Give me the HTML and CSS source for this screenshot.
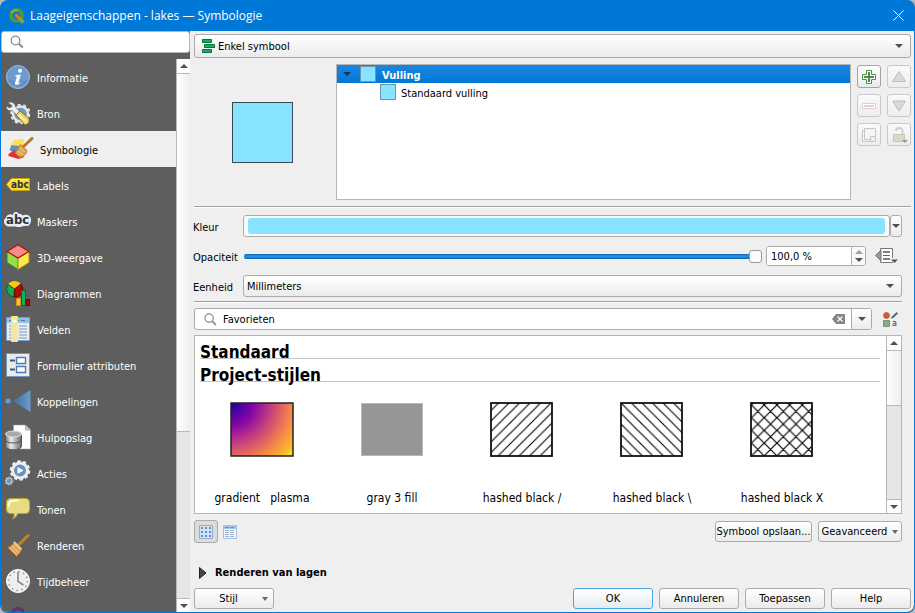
FILE: index.html
```html
<!DOCTYPE html>
<html lang="nl">
<head>
<meta charset="utf-8">
<title>Laageigenschappen - lakes — Symbologie</title>
<link rel="stylesheet" href="styles.css">
</head>
<body>
<div class="window">
  <header class="titlebar">
    <svg class="logo" width="16" height="16" viewBox="0 0 16 16" aria-hidden="true">
      <circle cx="7.500" cy="7.500" r="5.500" fill="none" stroke="#589632" stroke-width="3.500"/>
      <path d="M2.500 5A5.500 5.500 0 0 1 9 2.300" fill="none" stroke="#93b023" stroke-width="2"/>
      <path d="M10.500 10.500l4 4" stroke="#7fae38" stroke-width="3.500"/>
      <path d="M6.500 6.500l4 4" stroke="#ee7913" stroke-width="3"/>
    </svg>
    <h1 class="title">Laageigenschappen - lakes — Symbologie</h1>
    <button class="close" aria-label="Sluiten">
      <svg width="11" height="11" viewBox="0 0 11 11"><path d="M.5 .5l10 10M10.500 .5l-10 10" stroke="#fff" fill="none"/></svg>
    </button>
  </header>

  <div class="content">
    <aside class="sidebar">
      <div class="search">
        <svg width="14" height="14" viewBox="0 0 14 14" fill="none" stroke="#8c8c8c"><circle cx="5.500" cy="5.500" r="4.300" stroke-width="1.300"/><path d="M8.800 8.800l4 3.700" stroke-width="2"/></svg>
        <input type="text" aria-label="Zoeken">
      </div>
      <div class="side-body">
        <nav class="side-list">
          <a href="#" class="side-item">
            <svg width="24" height="24" viewBox="0 0 24 24"><circle cx="12" cy="12" r="11.500" fill="#6d9bcd" stroke="#9dbbe0"/><path d="M2 14a11 11 0 0 0 20 1c-6 2-14 2-20-1z" fill="#4f83bd" opacity=".5"/><circle cx="14" cy="5.800" r="2" fill="#fff"/><path d="M9.300 10.300l5.500-.8-2.300 8.200c-.2.900.6.700 2-.4l.4.500c-2 2.300-6.500 3-5.900.2l1.900-6.300-1.900-.7z" fill="#fff"/></svg>
            Informatie</a>
          <a href="#" class="side-item">
            <svg width="24" height="24" viewBox="0 0 24 24"><circle cx="14.500" cy="13" r="7.500" fill="#6d97c4" stroke="#e6e6e6" stroke-width="2.500"/><circle cx="14.500" cy="13" r="9.300" fill="none" stroke="#e6e6e6" stroke-width="2" stroke-dasharray="3 2.800"/><path d="M2 1.500c4-1 7 0 7.500 4.500l4 4.500-3 3-4.500-4c-4 .5-6-1-5.500-4l3.500 1.500L6.500 5z" fill="#efefef" stroke="#777" stroke-width=".7"/><path d="M10 14l4-4 9 7.500v4l-2.500 2h-2z" fill="#efd667" stroke="#8a7430"/><path d="M13 14l7 6.500" stroke="#fff2a6" stroke-width="2"/></svg>
            Bron</a>
          <a href="#" class="side-item selected" aria-current="page">
            <svg width="26" height="24" viewBox="0 0 26 24"><path d="M6 3l10-1-1 7-9 4-3-5z" fill="#fbe34c"/><path d="M3.500 8l8 1 2 7-9-1-3-2z" fill="#5b92ca"/><path d="M.5 17l6-4 10 7-6 2-10-3z" fill="#e33232"/><path d="M24 1.500l-8.500 8" stroke="#b9742a" stroke-width="3" stroke-linecap="round"/><path d="M12.500 7.500l6.500 6c-1 4-3 6-7.500 6.500L7 16z" fill="#dda653" stroke="#b87b2d"/><path d="M10 14l5 4M12 11l5 4" stroke="#f1cd8c"/></svg>
            Symbologie</a>
          <a href="#" class="side-item">
            <svg width="24" height="24" viewBox="0 0 24 24"><path d="M.5 11.500l5-6h18v12h-18z" fill="#f5dc3e" stroke="#c9a405"/><path d="M2 11l4-4.500h16.500" fill="none" stroke="#fff3a0"/><text x="5" y="15" class="glyph glyph-label">abc</text></svg>
            Labels</a>
          <a href="#" class="side-item">
            <svg class="mask" width="28" height="24" viewBox="0 0 28 24"><path d="M5 17.500a5 5 0 0 1-3-9c1-3 5-4 7-2.500 0-3 4-4 5-1.500 3 0 4 1 4.500 2 5-2 8.500 1 8.500 4s-1 7-5 6.500-4 1-7 1-4-.5-10-.5z" fill="#e7eef8"/><text x="2" y="15" class="glyph glyph-mask">abc</text></svg>
            Maskers</a>
          <a href="#" class="side-item">
            <svg width="24" height="26" viewBox="0 0 24 26"><path d="M1 7.500l11 6.500v11.500l-11-7z" fill="#8fe04c" stroke="#4c7c1d"/><path d="M23 7.500L12 14v11.500l11-7z" fill="#ffe94c" stroke="#b18d12"/><path d="M12 .8l11 6.700L12 14 1 7.500z" fill="#f58b8b" stroke="#b90d0d" stroke-width="1.200"/></svg>
            3D-weergave</a>
          <a href="#" class="side-item">
            <svg width="24" height="26" viewBox="0 0 24 26"><path d="M8.500 9L2 4.500A8 8 0 0 1 15 4z" fill="#fcc60b"/><path d="M8.500 9L2 4.500A8 8 0 0 0 8 17z" fill="#0cb457" stroke="#05602e"/><path d="M8.500 9L15 4a8 8 0 0 1-6.500 13z" fill="#b90808" stroke="#6c0000"/><path d="M10.500 18.500h4v7h-4z" fill="#fcca4a" stroke="#e28c06"/><path d="M15.500 10.500h4v15h-4z" fill="#0cb457" stroke="#05602e"/><path d="M20.500 19.500h3v6h-3z" fill="#b90808" stroke="#6c0000"/></svg>
            Diagrammen</a>
          <a href="#" class="side-item">
            <svg width="24" height="26" viewBox="0 0 24 26"><path d="M.5 1.500h23v23H.5z" fill="#ececec" stroke="#7ba1cf"/><path d="M1 2h22v5H1z" fill="#8fc1e6"/><path d="M3 4.500h18" stroke="#4b7dae" stroke-dasharray="4 2"/><path d="M3 10h19M3 13h19M3 16h19M3 19h19M3 22h19" stroke="#7b9ac0" stroke-dasharray="8 2"/><path d="M5.500.5h6v25h-6z" fill="#f2e7a2" stroke="#fff24d"/><circle cx="8.500" cy="5" r="1.500" fill="#fff"/></svg>
            Velden</a>
          <a href="#" class="side-item">
            <svg width="24" height="24" viewBox="0 0 24 24"><path d="M.5 .5h23v23H.5z" fill="#e9ecef" stroke="#7396bc"/><path d="M4 7.500h5M4 16.500h5" stroke="#355c82" stroke-width="2"/><path d="M10.500 4.500h9v6h-9zM10.500 13.500h9v6h-9z" fill="#fff" stroke="#4b7db4" stroke-width="1.400"/></svg>
            Formulier attributen</a>
          <a href="#" class="side-item">
            <svg class="wide" width="26" height="24" viewBox="0 0 26 24"><defs><linearGradient id="cone" x1="0" x2="1"><stop offset="0" stop-color="#3e6da1"/><stop offset="1" stop-color="#6d9bcd"/></linearGradient></defs><path d="M8 12L25.500 1v22z" fill="url(#cone)"/><circle cx="3" cy="12" r="2.800" fill="#6d9bcd" stroke="#3e6da1" stroke-width=".5"/></svg>
            Koppelingen</a>
          <a href="#" class="side-item">
            <svg class="wide" width="26" height="26" viewBox="0 0 26 26"><defs><linearGradient id="drum" x1="0" x2="1"><stop offset="0" stop-color="#777"/><stop offset=".35" stop-color="#eee"/><stop offset="1" stop-color="#666"/></linearGradient></defs><path d="M8.500 1h12l5 5v19h-17z" fill="#fdfdfd" stroke="#999" stroke-width=".5"/><path d="M20.500 1v5h5z" fill="#ccc" stroke="#888" stroke-width=".6"/><path d="M.5 10v12c0 5 16 5 16 0V10z" fill="url(#drum)" stroke="#555"/><path d="M.5 16c0 4 16 4 16 0" fill="none" stroke="#555"/><ellipse cx="8.500" cy="10" rx="8" ry="3" fill="#aaa" stroke="#ddd"/></svg>
            Hulpopslag</a>
          <a href="#" class="side-item">
            <svg class="wide" width="26" height="26" viewBox="0 0 26 26"><circle cx="15" cy="10.500" r="7.500" fill="#6791c3" stroke="#eee" stroke-width="3"/><circle cx="15" cy="10.500" r="9.200" fill="none" stroke="#eee" stroke-width="2.200" stroke-dasharray="3.200 2.580"/><path d="M12.500 7l6 3.500-6 3.500z" fill="#fff"/><circle cx="4" cy="21" r="3.200" fill="#6d97c8" stroke="#ddd"/><circle cx="4" cy="21" r="4" fill="none" stroke="#bbb" stroke-dasharray="1.500 1.500"/></svg>
            Acties</a>
          <a href="#" class="side-item">
            <svg width="24" height="24" viewBox="0 0 24 24"><path d="M4.500 1.500h15q4 0 4 4v7q0 4-4 4h-8q0 3-5 5.500 2.500-3 1.500-5.500H4.500q-4 0-4-4v-7q0-4 4-4z" fill="#e7dc82" stroke="#c0a52e"/><path d="M2.500 10c0-6 2-6.500 10-6.500" fill="none" stroke="#fffce0" stroke-width="2"/></svg>
            Tonen</a>
          <a href="#" class="side-item">
            <svg width="24" height="24" viewBox="0 0 24 24"><path d="M22 2.500l-8.500 8.500" stroke="#c68221" stroke-width="3" stroke-linecap="round"/><path d="M8 8.500l7.500 7.500c0 3-3 5.500-5 7.500L1.500 14.500c2-1 5-2 6.500-6z" fill="#dda65a" stroke="#aa681c"/><path d="M8 9l7.500 7.500" stroke="#f0cc8f" stroke-width="2"/><path d="M4 15l7 7M6 13l7 7" stroke="#f0cc8f"/></svg>
            Renderen</a>
          <a href="#" class="side-item">
            <svg width="24" height="24" viewBox="0 0 24 24"><circle cx="12" cy="12" r="11.500" fill="#eeeeec" stroke="#fff"/><circle cx="12" cy="12" r="9.500" fill="none" stroke="#7a9cc5" stroke-width="1.600" stroke-dasharray="1.500 3.474"/><path d="M12 3v9.500l5.500 3.500" fill="none" stroke="#888a85" stroke-width="1.600"/></svg>
            Tijdbeheer</a>
          <a href="#" class="side-item" aria-label="Variabelen">
            <svg width="24" height="24" viewBox="0 0 24 24"><circle cx="12" cy="9" r="5.500" fill="none" stroke="#5e3768" stroke-width="3.500"/></svg>
          </a>
        </nav>
        <div class="scrollbar side-scroll" aria-hidden="true">
          <span class="sb-btn"><i class="tri up"></i></span>
          <span class="sb-thumb"></span>
          <span class="sb-track"></span>
          <span class="sb-btn"><i class="tri down"></i></span>
        </div>
      </div>
    </aside>

    <main class="main">
      <div class="combo with-icon">
        <svg class="lead" width="13" height="14" viewBox="0 0 13 14" fill="#0eb457" stroke="#087041"><path d="M.5.500h9v3h-9zM2.500 5.500h10v3h-10zM.5 10.500h9v3h-9z"/></svg>
        <select aria-label="Symboltype"><option>Enkel symbool</option></select>
        <i class="tri down"></i>
      </div>

      <section class="symbol-row">
        <div class="preview"><div class="swatch"></div></div>
        <div class="tree" role="tree" aria-label="Symboollagen">
          <div class="tree-row active" role="treeitem" aria-selected="true"><i class="tri down dark"></i><i class="chip"></i><b>Vulling</b></div>
          <div class="tree-row child" role="treeitem" aria-selected="false"><i class="chip"></i><span>Standaard vulling</span></div>
        </div>
        <div class="tools">
          <button class="tool enabled" aria-label="Symboollaag toevoegen"><svg width="16" height="16" viewBox="0 0 16 16"><path d="M5.500 1.500h5v4h4v5h-4v4h-5v-4h-4v-5h4z" fill="#fff" stroke="#4f8b4a"/><path d="M8 3v10M3 8h10" stroke="#4f8b4a" stroke-width="2"/></svg></button>
          <button class="tool" disabled aria-label="Omhoog"><svg width="16" height="16" viewBox="0 0 16 16"><path d="M8 2.500l6.500 10h-13z" fill="#d7dbdd" stroke="#b9bec0"/></svg></button>
          <button class="tool" disabled aria-label="Symboollaag verwijderen"><svg width="16" height="16" viewBox="0 0 16 16"><path d="M1.500 5.500h13v5h-13z" fill="#fff" stroke="#ddcfcb"/><path d="M3 8h10" stroke="#ddcfcb" stroke-width="2"/></svg></button>
          <button class="tool" disabled aria-label="Omlaag"><svg width="16" height="16" viewBox="0 0 16 16"><path d="M8 13l6.500-10h-13z" fill="#d7dbdd" stroke="#b9bec0"/></svg></button>
          <button class="tool" disabled aria-label="Dupliceren"><svg width="16" height="16" viewBox="0 0 16 16" fill="#f5f5f5" stroke="#c6c6c6"><path d="M1.500 3.500h10v11h-10z"/><path d="M3.500 1.500h11v11h-11z"/><path d="M9.500 9.500h5v5h-5z" fill="#f3efdc"/></svg></button>
          <button class="tool" disabled aria-label="Kleur vergrendelen"><svg width="18" height="18" viewBox="0 0 18 18"><path d="M6 5c0-4 7-4 6.500 0v3" fill="none" stroke="#cfcfcf" stroke-width="2"/><path d="M3.500 8.500h11v7h-11z" fill="#dcd8c4" stroke="#c9c5b4"/><path d="M12 14h6l-3 3z" fill="#999"/></svg></button>
        </div>
      </section>

      <hr class="rule">

      <section class="form">
        <label for="kleur">Kleur</label>
        <div class="line">
          <button id="kleur" class="color-btn" aria-label="Kleur"><span class="fill"></span></button>
          <button class="drop narrow" aria-label="Kleuropties"><i class="tri down"></i></button>
        </div>
        <label for="opac">Opaciteit</label>
        <div class="line">
          <input id="opac" class="slider" type="range" min="0" max="100" value="100">
          <div class="spin">
            <input type="text" value="100,0 %" aria-label="Opaciteit waarde">
            <span class="steps"><i class="tri up faint"></i><i class="tri down"></i></span>
          </div>
          <button class="flat override" aria-label="Data-gedefinieerd"><svg width="23" height="18" viewBox="0 0 23 18"><path d="M5.500 1.500h12v14h-12z" fill="#fff" stroke="#777"/><path d="M6 3v11L.5 8.500z" fill="#999" stroke="#777"/><path d="M8 5h7M8 12h7" stroke="#555" stroke-width="1.500"/><path d="M8 8.500h7" stroke="#666"/><path d="M15 11h8v4h-8z" fill="#efefef"/><path d="M16 12.500h7L19.500 16z" fill="#555"/></svg></button>
        </div>
        <label for="eenheid">Eenheid</label>
        <div class="line">
          <div class="combo unit">
            <select id="eenheid"><option>Millimeters</option></select>
            <i class="tri down"></i>
          </div>
        </div>
      </section>

      <hr class="rule short">

      <section class="filter-row">
        <div class="filter">
          <svg width="13" height="13" viewBox="0 0 14 14" fill="none" stroke="#8c8c8c"><circle cx="5.500" cy="5.500" r="4.500" stroke-width="1.300"/><path d="M8.800 8.800l4 4" stroke-width="2"/></svg>
          <input type="text" value="Favorieten" aria-label="Symboolgroep">
          <button class="flat" aria-label="Wissen"><svg width="13" height="10" viewBox="0 0 13 10"><path d="M0 5l4-5h9v10H4z" fill="#858585"/><path d="M5.500 2.500l5 5M10.500 2.500l-5 5" stroke="#fff" stroke-width="1.200"/></svg></button>
          <button class="drop inner" aria-label="Groep kiezen"><i class="tri down"></i></button>
        </div>
        <button class="flat style-mgr" aria-label="Stijlmanager"><svg width="15" height="15" viewBox="0 0 15 15"><circle cx="3.500" cy="3.500" r="3" fill="#cf5f2d" stroke="#a9471d" stroke-width=".6"/><path d="M8 6.500q0-2 2-3L13.500 0 15 1.500 11.500 5Q10 6.500 8 6.500z" fill="#446e9c"/><path d="M.5 8.500h6v6h-6z" fill="#86b08c" stroke="#6d9c74"/><text x="9" y="14" class="glyph glyph-small">a</text></svg></button>
      </section>

      <section class="gallery">
        <div class="gallery-body">
          <h2>Standaard</h2>
          <h2>Project-stijlen</h2>
          <ul class="symbols">
            <li><svg width="64" height="56" viewBox="0 0 64 56"><defs><radialGradient id="plasma" gradientUnits="userSpaceOnUse" cx="0" cy="0" r="84"><stop offset="0" stop-color="#0d0887"/><stop offset=".13" stop-color="#4903a0"/><stop offset=".28" stop-color="#8405a7"/><stop offset=".45" stop-color="#b93289"/><stop offset=".62" stop-color="#e16462"/><stop offset=".75" stop-color="#f68d45"/><stop offset=".88" stop-color="#fdb52e"/><stop offset="1" stop-color="#f0f921"/></radialGradient></defs><rect x="1" y="1" width="62" height="53" fill="url(#plasma)" stroke="#222" stroke-width="1.500"/></svg><span>gradient&nbsp;&nbsp; plasma</span></li>
            <li><svg width="64" height="56" viewBox="0 0 64 56"><rect x="1.500" y="1.500" width="61" height="52" fill="#969696" stroke="#b9b9b9"/></svg><span>gray 3 fill</span></li>
            <li><svg width="64" height="56" viewBox="0 0 64 56"><defs><pattern id="fwd" x="-1" width="10.500" height="10.500" patternUnits="userSpaceOnUse"><path d="M-2 12.500L12.500-2M-2 2L2-2M8.500 12.500l4-4" stroke="#000" stroke-width="1.100"/></pattern></defs><rect x="1" y="1" width="61" height="53" fill="url(#fwd)" stroke="#111" stroke-width="1.800"/></svg><span>hashed black /</span></li>
            <li><svg width="64" height="56" viewBox="0 0 64 56"><defs><pattern id="back" width="10.500" height="10.500" patternUnits="userSpaceOnUse"><path d="M-2-2L12.500 12.500M8.500-2l4 4M-2 8.500l4 4" stroke="#000" stroke-width="1.100"/></pattern></defs><rect x="1" y="1" width="61" height="53" fill="url(#back)" stroke="#111" stroke-width="1.800"/></svg><span>hashed black \</span></li>
            <li><svg width="64" height="56" viewBox="0 0 64 56"><defs><pattern id="cross" x="1.500" y="3" width="12.700" height="12.700" patternUnits="userSpaceOnUse"><path d="M-2-2L14.700 14.700M10.700-2l4 4M-2 10.700l4 4M-2 14.700L14.700-2M-2 2L2-2M10.700 14.700l4-4" stroke="#000" stroke-width="1.200"/></pattern></defs><rect x="1" y="1" width="61" height="53" fill="url(#cross)" stroke="#111" stroke-width="1.800"/></svg><span>hashed black X</span></li>
          </ul>
        </div>
        <div class="scrollbar gallery-scroll" aria-hidden="true">
          <span class="sb-btn"><i class="tri up"></i></span>
          <span class="sb-thumb"></span>
          <span class="sb-track"></span>
          <span class="sb-btn"><i class="tri down"></i></span>
        </div>
      </section>

      <section class="actions">
        <button class="tool pressed" aria-label="Pictogrammen" aria-pressed="true"><svg width="14" height="14" viewBox="0 0 14 14"><path d="M.5.500h13v13H.5z" fill="#d4e2f1" stroke="#8cb0da"/><path d="M2 3h10M2 7h10M2 11h10" stroke="#5e8fc6" stroke-width="2" stroke-dasharray="2 2"/></svg></button>
        <button class="flat list-view" aria-label="Lijst"><svg width="14" height="14" viewBox="0 0 14 14"><path d="M.5.500h13v13H.5z" fill="#f2f4f6" stroke="#a3c1e0"/><path d="M1 1h12v3H1z" fill="#a3c6e8"/><path d="M2 2.500h10" stroke="#5e8fc6" stroke-dasharray="4 1"/><path d="M2 5.500h10M2 7.500h10M2 9.500h10M2 11.500h10" stroke="#9db6d2" stroke-dasharray="4 1"/></svg></button>
        <span class="grow"></span>
        <button class="btn save">Symbool opslaan...</button>
        <button class="btn adv">Geavanceerd <i class="tri down small"></i></button>
      </section>

      <button class="collapse"><svg width="8" height="12" viewBox="0 0 8 12"><path d="M.5.500L7 6 .5 11.500z" fill="#444" stroke="#222"/></svg>Renderen van lagen</button>

      <footer class="footer">
        <button class="btn wide-btn style-btn"><span>Stijl</span><i class="tri down small"></i></button>
        <span class="grow"></span>
        <button class="btn wide-btn default">OK</button>
        <button class="btn wide-btn">Annuleren</button>
        <button class="btn wide-btn">Toepassen</button>
        <button class="btn wide-btn">Help</button>
      </footer>
    </main>
  </div>
</div>
</body>
</html>
```
FILE: styles.css
```css
* { box-sizing: border-box; }

body {
  margin: 0;
  height: 100vh;
  background: #b9b9b9;
  color: #000;
  font: 11px/16px "DejaVu Sans Condensed", "Noto Sans", sans-serif;
}

button, input, select { font: inherit; color: inherit; margin: 0; padding: 0; }
button { cursor: default; }
svg { display: block; flex: none; }

.window {
  height: 100vh;
  display: flex;
  flex-direction: column;
  background: #0078d7;
  border: solid #0078d7;
  border-width: 0 1px 1px;
  border-radius: 8px;
  overflow: hidden;
}

/* Title bar */
.titlebar {
  flex: none;
  height: 31px;
  display: flex;
  align-items: center;
  padding: 0 10px 0 8px;
  color: #fff;
}
.title { flex: 1; margin: 0 0 0 5px; font: 12px/18px "Open Sans", "Noto Sans", sans-serif; }
.close { border: 0; background: none; }

.content { flex: 1; min-height: 0; display: flex; background: #efefef; border-radius: 0 0 7px 7px; overflow: hidden; }

/* Sidebar */
.sidebar { flex: none; width: 189px; display: flex; flex-direction: column; background: #5e5e5e; }
.search {
  flex: none;
  height: 22px;
  display: flex;
  align-items: center;
  gap: 8px;
  padding: 0 8px;
  background: #fff;
  border: 1px solid #b5b5b5;
  border-radius: 3px;
}
.search input { flex: 1; min-width: 0; border: 0; background: none; outline: 0; }
.side-body { flex: 1; min-height: 0; display: flex; padding-top: 6px; }
.side-list { flex: 1; overflow: hidden; }
.side-item {
  height: 36px;
  display: flex;
  align-items: center;
  gap: 7px;
  padding: 3px 5px 0;
  color: #fff;
  text-decoration: none;
  white-space: nowrap;
}
.side-item svg { margin-bottom: 3px; }
.side-item .wide { margin-left: -1px; margin-right: -1px; }
.side-item .mask { margin-left: -2px; margin-right: -2px; }
.side-item.selected { background: #efefef; color: #000; padding-left: 7px; gap: 6px; }

/* Scroll bars */
.scrollbar { flex: none; display: flex; flex-direction: column; background: #e5e5e5; border-left: 1px solid #b8b8b8; }
.sb-btn { flex: none; height: 14px; display: grid; place-items: center; background: #fdfdfd; }
.sb-thumb { background: linear-gradient(90deg, #fff, #eee); border: solid #b8b8b8; border-width: 1px 0; }
.sb-track { flex: 1; }
.sb-track + .sb-btn { border-top: 1px solid #b8b8b8; }
.side-scroll { width: 14px; }
.side-scroll .sb-thumb { flex: 0 0 65%; }
.gallery-scroll { width: 15px; }
.gallery-scroll .sb-thumb { flex: 0 0 56px; }

.tri { flex: none; width: 0; height: 0; border: solid transparent; border-width: 0 4px; }
.tri.down { border-top: 4px solid #505050; }
.tri.up { border-bottom: 4px solid #505050; }
.tri.faint { border-bottom-color: #9d9d9d; }
.tri.dark { border-top-color: #123352; }
.tri.small { border-width: 4px 3px 0; border-top-color: #666; }

/* Main column */
.main { flex: 1; min-width: 0; display: flex; flex-direction: column; padding: 3px 3px 3px 4px; }

.combo { position: relative; display: flex; }
.combo select {
  appearance: none;
  flex: 1;
  min-width: 0;
  height: 24px;
  padding: 2px 20px 0 3px;
  background: linear-gradient(#fff, #ebebeb);
  border: 1px solid #ababab;
  border-radius: 3px;
}
.combo.with-icon select { padding-left: 23px; }
.combo .lead { position: absolute; left: 8px; top: 5px; }
.combo .tri { position: absolute; right: 8px; top: 10px; pointer-events: none; }
.combo.unit { flex: 1; margin-right: 9px; }
.combo.unit select { height: 22px; }
.combo.unit .tri { top: 9px; }

.symbol-row { display: flex; gap: 6px; padding: 6px 0; height: 148px; }
.preview { flex: 0 0 136px; display: grid; place-items: center; }
.swatch { width: 61px; height: 61px; background: #87e3ff; border: 1px solid #354a52; }
.tree { flex: 1; background: #fff; border: 1px solid #b5b5b5; }
.tree-row { height: 18px; display: flex; align-items: center; }
.tree-row b, .tree-row span { padding-top: 3px; }
.tree-row.active { padding-left: 6px; color: #fff; background: linear-gradient(#1a86e0, #0078d7); }
.tree-row .chip { width: 16px; height: 16px; background: #87e3ff; border: 1px solid #6798a8; }
.tree-row.active .chip { margin: 0 6px 0 9px; }
.tree-row.child { padding-left: 43px; gap: 5px; }

.tools { flex: none; display: grid; grid-template-columns: 24px 24px; grid-auto-rows: 23px; gap: 6px; align-content: start; padding-top: 1px; }
.tool {
  display: grid;
  place-items: center;
  width: 24px;
  height: 23px;
  background: linear-gradient(#fafafa, #ededed);
  border: 1px solid #c9c9c9;
  border-radius: 3px;
}
.tool.enabled { background: linear-gradient(#fff, #ebebeb); border-color: #a5a5a5; }
.tool.pressed { background: #dcdcdc; border-color: #ababab; }

.rule { flex: none; width: 100%; height: 2px; margin: 0; border: 0; border-top: 1px solid #a0a0a0; background: #fff; }
.rule.short { width: calc(100% - 9px); }

.form { display: grid; grid-template-columns: 49px 1fr; grid-auto-rows: 22px; gap: 8px 0; align-items: center; padding: 7px 0 4px; }
.form label { margin-left: -1px; padding-top: 3px; }
.line { display: flex; align-items: center; min-width: 0; }
.color-btn { flex: 1; height: 22px; padding: 2px 4px; display: flex; background: #fafafa; border: 1px solid #ababab; border-radius: 3px; }
.color-btn .fill { flex: 1; background: #87e3ff; border-radius: 3px; }
.drop { display: grid; place-items: center; background: linear-gradient(#fff, #ebebeb); border: 1px solid #ababab; border-radius: 3px; }
.drop.narrow { width: 12px; height: 22px; margin-right: 9px; }

.slider { appearance: none; flex: 1; min-width: 0; height: 20px; margin: 0 4px 0 1px; background: none; }
.slider::-webkit-slider-runnable-track { height: 5px; background: linear-gradient(#0a5ca8, #2a96ee 40%, #1583e0 70%, #0a5ca8); border-radius: 2px; }
.slider::-webkit-slider-thumb { appearance: none; width: 13px; height: 13px; margin-top: -4px; background: #fbfbfb; border: 1px solid #999; border-radius: 3px; }
.spin { flex: none; display: flex; width: 100px; height: 20px; background: #fff; border: 1px solid #ababab; border-radius: 3px; overflow: hidden; }
.spin input { flex: 1; min-width: 0; padding: 2px 0 0 4px; border: 0; outline: 0; }
.steps { display: flex; flex-direction: column; align-items: center; justify-content: center; gap: 4px; width: 14px; border-left: 1px solid #b5b5b5; background: #f8f8f8; }
.flat { flex: none; border: 0; background: none; }
.override { margin: 0 13px 0 9px; }

.filter-row { display: flex; align-items: center; padding: 5px 0; }
.filter { flex: 1; height: 22px; display: flex; align-items: center; gap: 6px; padding-left: 9px; background: #fff; border: 1px solid #ababab; border-radius: 3px; }
.filter input { flex: 1; min-width: 0; padding-top: 2px; border: 0; outline: 0; }
.drop.inner { width: 20px; height: 20px; border-width: 0 0 0 1px; border-radius: 0 2px 2px 0; }
.style-mgr { margin: 0 13px 0 11px; }

.gallery { flex: none; height: 179px; display: flex; margin-right: 9px; background: #fff; border: 1px solid #b5b5b5; }
.gallery-body { flex: 1; min-width: 0; overflow: hidden; padding: 4px 6px 0 5px; }
.gallery h2 { margin: 0 0 4px; height: 19px; font: bold 17px/24px "DejaVu Sans Condensed", "Noto Sans", sans-serif; border-bottom: 1px solid #c4c4c4; }
.symbols { display: flex; margin: 0 0 0 -3px; padding: 16px 0 0; list-style: none; }
.symbols li { flex: 0 0 130px; display: flex; flex-direction: column; align-items: center; gap: 31px; font-size: 12px; line-height: 18px; }

.actions { flex: none; display: flex; align-items: center; gap: 6px; padding: 6px 9px 0 0; }
.list-view { margin-left: -1px; }
.grow { flex: 1; }
.btn {
  display: flex;
  align-items: center;
  justify-content: center;
  height: 21px;
  padding-top: 1px;
  background: linear-gradient(#fff, #ebebeb);
  border: 1px solid #ababab;
  border-radius: 3px;
  white-space: nowrap;
}
.save { width: 97px; }
.adv { width: 84px; gap: 5px; }
.wide-btn { width: 80px; }
.default { border-color: #4ba6e8; background: linear-gradient(#fff, #e4ebf0); }
.style-btn span { flex: 1; }
.style-btn .tri { margin-right: 5px; }

.collapse { flex: 1; display: flex; align-items: center; align-self: flex-start; gap: 8px; padding: 14px 5px 0; border: 0; background: none; font-weight: bold; }
.footer { flex: none; display: flex; gap: 6px; }

/* Lettering inside icons */
.glyph { font-family: "DejaVu Sans Condensed", sans-serif; font-weight: bold; fill: #333; }
.glyph-label { font-size: 10px; }
.glyph-mask { font-size: 13px; }
.glyph-small { font-size: 9px; font-weight: normal; }
```
